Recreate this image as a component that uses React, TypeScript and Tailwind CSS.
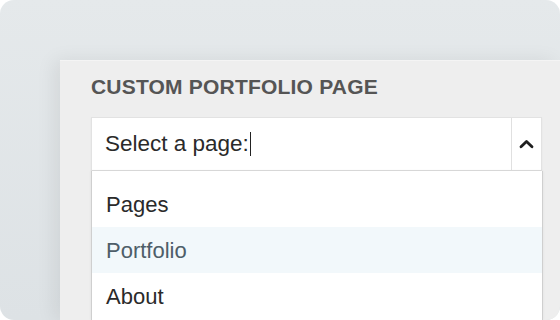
import React from "react";

export default function App() {
  const font = { fontFamily: '"Liberation Sans", Arial, sans-serif' };
  return (
    <div className="w-[560px] h-[320px] bg-white overflow-hidden" style={font}>
      <div className="w-full h-full rounded-[14px] overflow-hidden bg-gradient-to-b from-[#e5e9eb] to-[#dde2e5] flex flex-col pl-[60px] pt-[60px]">
        <div className="flex-1 bg-[#eeeeee] border-t border-[#f4f4f4] shadow-[-6px_0_18px_rgba(0,0,0,0.07)] pl-[31px] pt-[14px] flex flex-col">
          <div className="text-[21px] leading-[24px] font-bold text-[#555555] tracking-[0.2px]">
            CUSTOM PORTFOLIO PAGE
          </div>
          <div className="mt-[18px] w-[451px] h-[54px] bg-white border border-[#e2e2e2] border-b-[#dcdcdc] flex items-stretch shadow-[0_1px_2px_rgba(0,0,0,0.04)]">
            <div className="flex-1 flex items-center pl-[13px] text-[22.5px] text-[#2a2a2a]">
              <span>Select a page:</span>
              <span className="inline-block w-[1.5px] h-[24px] bg-[#222] ml-[1px]" />
            </div>
            <div className="w-[30px] border-l border-[#e0e0e0] flex items-center justify-center">
              <svg width="15" height="10" viewBox="0 0 15 10">
                <path d="M2 7.8 L7.5 2.4 L13 7.8" fill="none" stroke="#1f1f1f" strokeWidth="2.8" strokeLinecap="round" strokeLinejoin="round" />
              </svg>
            </div>
          </div>
          <div className="flex-1 w-[452px] bg-white border-l border-r border-[#cfcfcf] pt-[10px] text-[22px] shadow-[0_0_3px_rgba(0,0,0,0.06)]">
            <div className="h-[46px] flex items-center pl-[14px] text-[#2a2a2a]">Pages</div>
            <div className="h-[46px] flex items-center pl-[14px] text-[#4e5e69] bg-[#f2f8fb]">Portfolio</div>
            <div className="h-[46px] flex items-center pl-[14px] text-[#2a2a2a]">About</div>
          </div>
        </div>
      </div>
    </div>
  );
}
